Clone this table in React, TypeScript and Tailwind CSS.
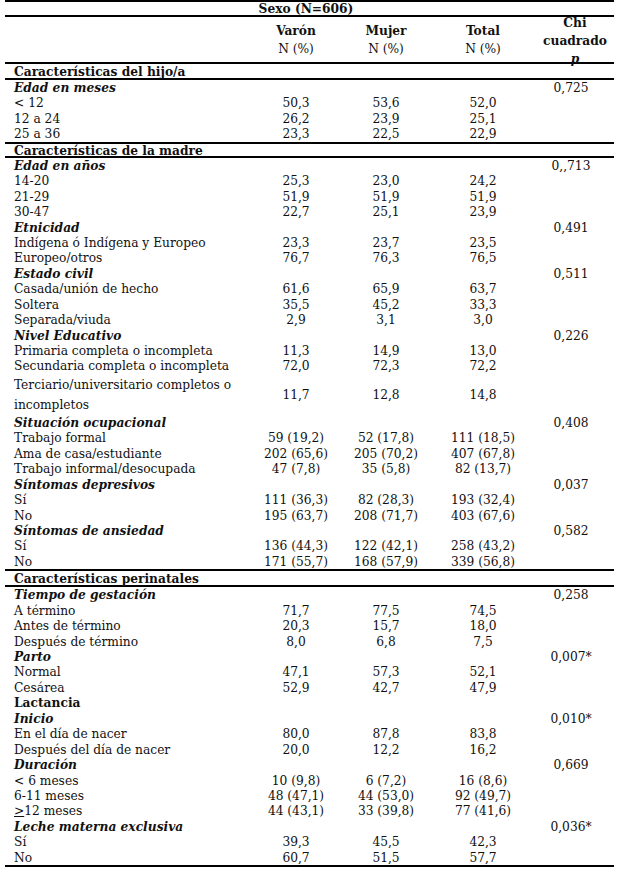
import React from "react";

type Row =
  | { t: "sec"; l: string; h: string; top?: boolean }
  | { t: "sub"; l: string; p?: string }
  | { t: "bold"; l: string }
  | { t: "d"; l: React.ReactNode; v: [string, string, string] }
  | { t: "tall"; v: [string, string, string] };

const rows: Row[] = [
  { t: "sec", l: "Características del hijo/a", h: "h-[16px]" },
  { t: "sub", l: "Edad en meses", p: "0,725" },
  { t: "d", l: "< 12", v: ["50,3", "53,6", "52,0"] },
  { t: "d", l: "12 a 24", v: ["26,2", "23,9", "25,1"] },
  { t: "d", l: "25 a 36", v: ["23,3", "22,5", "22,9"] },
  { t: "sec", l: "Características de la madre", h: "h-[16px]", top: true },
  { t: "sub", l: "Edad en años", p: "0,,713" },
  { t: "d", l: "14-20", v: ["25,3", "23,0", "24,2"] },
  { t: "d", l: "21-29", v: ["51,9", "51,9", "51,9"] },
  { t: "d", l: "30-47", v: ["22,7", "25,1", "23,9"] },
  { t: "sub", l: "Etnicidad", p: "0,491" },
  { t: "d", l: "Indígena ó Indígena y Europeo", v: ["23,3", "23,7", "23,5"] },
  { t: "d", l: "Europeo/otros", v: ["76,7", "76,3", "76,5"] },
  { t: "sub", l: "Estado civil", p: "0,511" },
  { t: "d", l: "Casada/unión de hecho", v: ["61,6", "65,9", "63,7"] },
  { t: "d", l: "Soltera", v: ["35,5", "45,2", "33,3"] },
  { t: "d", l: "Separada/viuda", v: ["2,9", "3,1", "3,0"] },
  { t: "sub", l: "Nivel Educativo", p: "0,226" },
  { t: "d", l: "Primaria completa o incompleta", v: ["11,3", "14,9", "13,0"] },
  { t: "d", l: "Secundaria completa o incompleta", v: ["72,0", "72,3", "72,2"] },
  { t: "tall", v: ["11,7", "12,8", "14,8"] },
  { t: "sub", l: "Situación ocupacional", p: "0,408" },
  { t: "d", l: "Trabajo formal", v: ["59 (19,2)", "52 (17,8)", "111 (18,5)"] },
  { t: "d", l: "Ama de casa/estudiante", v: ["202 (65,6)", "205 (70,2)", "407 (67,8)"] },
  { t: "d", l: "Trabajo informal/desocupada", v: ["47 (7,8)", "35 (5,8)", "82 (13,7)"] },
  { t: "sub", l: "Síntomas depresivos", p: "0,037" },
  { t: "d", l: "Sí", v: ["111 (36,3)", "82 (28,3)", "193 (32,4)"] },
  { t: "d", l: "No", v: ["195 (63,7)", "208 (71,7)", "403 (67,6)"] },
  { t: "sub", l: "Síntomas de ansiedad", p: "0,582" },
  { t: "d", l: "Sí", v: ["136 (44,3)", "122 (42,1)", "258 (43,2)"] },
  { t: "d", l: "No", v: ["171 (55,7)", "168 (57,9)", "339 (56,8)"] },
  { t: "sec", l: "Características perinatales", h: "h-[18px]", top: true },
  { t: "sub", l: "Tiempo de gestación", p: "0,258" },
  { t: "d", l: "A término", v: ["71,7", "77,5", "74,5"] },
  { t: "d", l: "Antes de término", v: ["20,3", "15,7", "18,0"] },
  { t: "d", l: "Después de término", v: ["8,0", "6,8", "7,5"] },
  { t: "sub", l: "Parto", p: "0,007*" },
  { t: "d", l: "Normal", v: ["47,1", "57,3", "52,1"] },
  { t: "d", l: "Cesárea", v: ["52,9", "42,7", "47,9"] },
  { t: "bold", l: "Lactancia" },
  { t: "sub", l: "Inicio", p: "0,010*" },
  { t: "d", l: "En el día de nacer", v: ["80,0", "87,8", "83,8"] },
  { t: "d", l: "Después del día de nacer", v: ["20,0", "12,2", "16,2"] },
  { t: "sub", l: "Duración", p: "0,669" },
  { t: "d", l: "< 6 meses", v: ["10 (9,8)", "6 (7,2)", "16 (8,6)"] },
  { t: "d", l: "6-11 meses", v: ["48 (47,1)", "44 (53,0)", "92 (49,7)"] },
  {
    t: "d",
    l: (
      <>
        <span className="underline">&gt;</span>12 meses
      </>
    ),
    v: ["44 (43,1)", "33 (39,8)", "77 (41,6)"],
  },
  { t: "sub", l: "Leche materna exclusiva", p: "0,036*" },
  { t: "d", l: "Sí", v: ["39,3", "45,5", "42,3"] },
  { t: "d", l: "No", v: ["60,7", "51,5", "57,7"] },
];

function Cells({ v, p }: { v?: [string, string, string]; p?: string }) {
  return (
    <>
      <div className="w-[92px] text-center whitespace-nowrap">{v ? v[0] : ""}</div>
      <div className="w-[88px] text-center whitespace-nowrap">{v ? v[1] : ""}</div>
      <div className="w-[106px] text-center whitespace-nowrap">{v ? v[2] : ""}</div>
      <div className="w-[78px] pr-[8px] text-center whitespace-nowrap">{p ?? ""}</div>
    </>
  );
}

export default function App() {
  return (
    <div className="w-[618px] h-[869px] bg-white text-[#111] font-['DejaVu_Serif_Condensed','Liberation_Serif',serif] text-[13.6px] overflow-hidden">
      <div className="ml-[5px] w-[609px] border-t-2 border-black">
        <div className="flex items-center justify-center h-[15px] leading-[13px] font-bold pr-[7px] border-b-2 border-black">
          Sexo (N=606)
        </div>
        <div className="flex h-[47px] border-b-2 border-black">
          <div className="w-[245px]" />
          <div className="w-[92px] flex flex-col items-center justify-center leading-[17.6px]">
            <span className="font-bold">Varón</span>
            <span>N (%)</span>
          </div>
          <div className="w-[88px] flex flex-col items-center justify-center leading-[17.6px]">
            <span className="font-bold">Mujer</span>
            <span>N (%)</span>
          </div>
          <div className="w-[106px] flex flex-col items-center justify-center leading-[17.6px]">
            <span className="font-bold">Total</span>
            <span>N (%)</span>
          </div>
          <div className="w-[78px] flex flex-col items-center justify-center leading-[18px] font-bold">
            <span>Chi</span>
            <span>cuadrado</span>
            <span className="italic">p</span>
          </div>
        </div>
        {rows.map((r, i) => {
          const last = i === rows.length - 1;
          if (r.t === "sec") {
            return (
              <div
                key={i}
                className={
                  "flex items-center leading-[14px] border-b-2 border-black font-bold " +
                  r.h +
                  (r.top ? " border-t-2" : "")
                }
              >
                <div className="pl-[9px] whitespace-nowrap">{r.l}</div>
              </div>
            );
          }
          const rowCls = last
            ? "flex h-[17.45px] leading-[15.45px] border-b-2 border-black"
            : "flex h-[15.45px] leading-[15.45px]";
          if (r.t === "sub") {
            return (
              <div key={i} className={rowCls}>
                <div className="w-[245px] pl-[9px] font-bold italic whitespace-nowrap">{r.l}</div>
                <Cells p={r.p} />
              </div>
            );
          }
          if (r.t === "bold") {
            return (
              <div key={i} className={rowCls}>
                <div className="w-[245px] pl-[9px] font-bold whitespace-nowrap">{r.l}</div>
                <Cells />
              </div>
            );
          }
          if (r.t === "tall") {
            return (
              <div key={i} className="flex items-center h-[41px]">
                <div className="w-[245px] pl-[9px] leading-[20px] whitespace-nowrap">
                  Terciario/universitario completos o
                  <br />
                  incompletos
                </div>
                <Cells v={r.v} />
              </div>
            );
          }
          return (
            <div key={i} className={rowCls}>
              <div className="w-[245px] pl-[9px] whitespace-nowrap">{r.l}</div>
              <Cells v={r.v} />
            </div>
          );
        })}
      </div>
    </div>
  );
}
